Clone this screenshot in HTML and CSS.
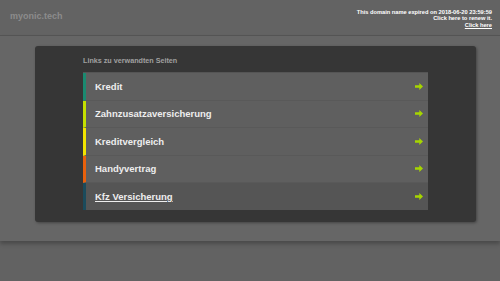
FILE: index.html
```html
<!DOCTYPE html>
<html lang="de">
<head>
    <meta charset="UTF-8">
    <meta name="viewport" content="width=device-width, initial-scale=1.0">
    <title>myonic.tech</title>
    <link rel="stylesheet" href="styles.css">
</head>
<body>
<div class="header">
    <div class="logo">myonic.tech</div>
    <div class="expired">
        This domain name expired on 2018-06-20 23:59:59<br>
        Click here to renew it.<br>
        <a href="#">Click here</a>
    </div>
</div>
<div class="content">
    <div class="panel">
        <div class="title">Links zu verwandten Seiten</div>
        <ul class="links">
            <li class="c1"><a href="#">Kredit</a></li>
            <li class="c2"><a href="#">Zahnzusatzaversicherung</a></li>
            <li class="c3"><a href="#">Kreditvergleich</a></li>
            <li class="c4"><a href="#">Handyvertrag</a></li>
            <li class="c5 active"><a href="#">Kfz Versicherung</a></li>
        </ul>
    </div>
</div>
<div class="bottom"></div>
</body>
</html>
```

FILE: styles.css
```css
body {
    margin: 0;
    font-family: "Liberation Sans", Arial, sans-serif;
    background: #626262;
    height: 281px;
    overflow: hidden;
}
.header {
    height: 35px;
    background: #636363;
    border-bottom: 1px solid #555;
    display: flex;
    justify-content: space-between;
    align-items: flex-start;
    padding: 0 8px 0 10px;
}
.logo {
    margin-top: 11px;
    font-size: 9px;
    font-weight: bold;
    color: #8c8c8c;
}
.expired {
    margin-top: 9px;
    text-align: right;
    font-size: 5.7px;
    line-height: 6.3px;
    font-weight: bold;
    color: #fff;
}
.expired a {
    color: #fff;
}
.content {
    background: #666;
    padding: 10px 24px 19px 35px;
    box-shadow: 0 3px 4px rgba(0, 0, 0, 0.25);
    position: relative;
}
.panel {
    width: 345px;
    background: #363636;
    border-radius: 3px;
    padding: 10px 48px 12px 48px;
    box-shadow: 1px 1px 3px rgba(0, 0, 0, 0.35);
}
.title {
    font-size: 7.2px;
    font-weight: bold;
    color: #a0a0a0;
    height: 16px;
    line-height: 10px;
}
.links {
    list-style: none;
    margin: 0;
    padding: 0;
    border-top: 1px solid #555;
}
.links li {
    height: 26.5px;
    border-left: 3px solid #1a8a70;
    border-bottom: 1px solid #595959;
    background: #5f5f5f;
    display: flex;
    align-items: center;
    justify-content: space-between;
    padding: 0 5px 0 9px;
}
.links li:last-child {
    border-bottom: none;
    height: 27px;
}
.links li::after {
    content: "";
    width: 8px;
    height: 7px;
    background: url("data:image/svg+xml,%3Csvg xmlns='http://www.w3.org/2000/svg' viewBox='0 0 8 7'%3E%3Cpath d='M0 2.3h4.3V0L8 3.5 4.3 7V4.7H0z' fill='%23a6d600'/%3E%3C/svg%3E") no-repeat;
}
.links a {
    font-size: 9.5px;
    font-weight: bold;
    color: #eee;
    text-decoration: none;
}
.links .c2 { border-left-color: #c4e000; }
.links .c3 { border-left-color: #f2e400; }
.links .c4 { border-left-color: #e8600c; }
.links .c5 { border-left-color: #1b4b5c; }
.links .active { background: #555; }
.links .active a { text-decoration: underline; }
.bottom {
    height: 40px;
}
```
